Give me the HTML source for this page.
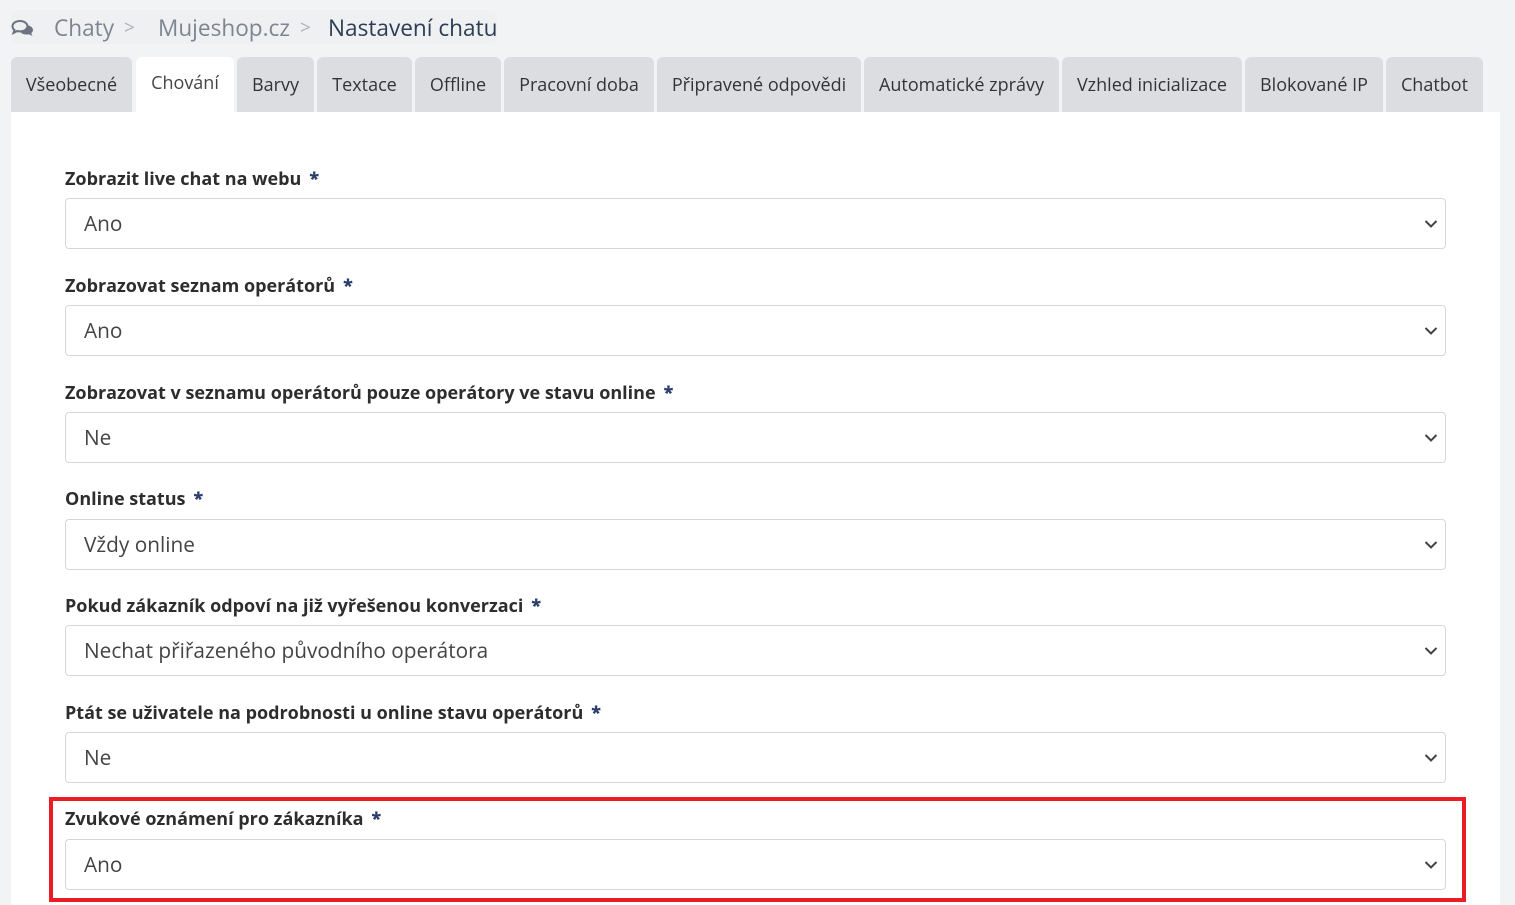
<!DOCTYPE html>
<html><head><meta charset="utf-8"><style>
*{box-sizing:border-box;margin:0;padding:0}
body{width:1515px;height:905px;overflow:hidden;background:#f2f3f5;font-family:"Open Sans","Liberation Sans",sans-serif;color:#333;position:relative}
.bc{position:absolute;left:11px;top:11px;width:486px;height:33px;background:#eff0f2;border-radius:6px;font-size:22.6px;line-height:33px;white-space:nowrap}
.bc span{position:absolute;top:0}
.g{color:#7d8592}.s{color:#aab0b8;font-size:19px}.d{color:#2c3e55}
.tab{position:absolute;top:57px;height:55px;background:#dcdde1;border-radius:6px 6px 0 0;font-size:18px;line-height:57px;text-align:center;color:#333}
.tab.a{background:#fff;line-height:53px;color:#444}
.panel{position:absolute;left:11px;top:112px;width:1489px;height:793px;background:#fff}
.lab{position:absolute;left:65px;font-weight:bold;font-size:18px;color:#2d2d2d;white-space:nowrap}
.lab b{color:#2c3e6a;margin-left:8px}
.sel{position:absolute;left:65px;width:1381px;height:51px;border:1px solid #d5d7da;border-radius:4px;font-size:20.8px;line-height:50px;padding-left:18px;color:#444}
.sel svg{position:absolute;right:7px;top:20px}
.red{position:absolute;left:49px;top:797px;width:1417px;height:105px;border:4px solid #ea1c24}
</style></head><body>
<div class="bc">
<svg style="position:absolute;left:0;top:8px" width="24" height="18" viewBox="0 0 24 18"><path d="M9 2C4.5 2 1.5 4.5 1.5 7.3c0 1.5.8 2.8 2 3.7L2.5 14l3.8-2c.9.3 1.8.4 2.7.4 4.5 0 7.5-2.5 7.5-5.1S13.5 2 9 2z" fill="none" stroke="#6b7380" stroke-width="2"/><path d="M17.5 6.5c2.7.7 4.5 2.5 4.5 4.5 0 1.3-.7 2.4-1.8 3.2L21.5 17l-3.7-1.8c-.8.2-1.6.3-2.5.3-2.5 0-4.6-.8-5.9-2.1 4 0 7.6-2.6 8.1-6.9z" fill="#6b7380"/></svg>
<span class="g" style="left:43px">Chaty</span><span class="s" style="left:113px">&gt;</span>
<span class="g" style="left:147px">Mujeshop.cz</span><span class="s" style="left:289px">&gt;</span>
<span class="d" style="left:317px">Nastavení chatu</span></div>
<div class="panel"></div>
<div class="tab" style="left:11px;width:121px">Všeobecné</div>
<div class="tab a" style="left:136px;width:98px">Chování</div>
<div class="tab" style="left:237px;width:77px">Barvy</div>
<div class="tab" style="left:317px;width:95px">Textace</div>
<div class="tab" style="left:415px;width:86px">Offline</div>
<div class="tab" style="left:504px;width:150px">Pracovní doba</div>
<div class="tab" style="left:657px;width:204px">Připravené odpovědi</div>
<div class="tab" style="left:864px;width:195px">Automatické zprávy</div>
<div class="tab" style="left:1062px;width:180px">Vzhled inicializace</div>
<div class="tab" style="left:1245px;width:138px">Blokované IP</div>
<div class="tab" style="left:1386px;width:97px">Chatbot</div>

<div class="lab" style="top:167px">Zobrazit live chat na webu<b>*</b></div>
<div class="sel" style="top:198px">Ano<svg width="14" height="10" viewBox="0 0 14 10"><path d="M1.5 2l5.5 5.5L12.5 2" fill="none" stroke="#444" stroke-width="2"/></svg></div>
<div class="lab" style="top:274px">Zobrazovat seznam operátorů<b>*</b></div>
<div class="sel" style="top:305px">Ano<svg width="14" height="10" viewBox="0 0 14 10"><path d="M1.5 2l5.5 5.5L12.5 2" fill="none" stroke="#444" stroke-width="2"/></svg></div>
<div class="lab" style="top:381px">Zobrazovat v seznamu operátorů pouze operátory ve stavu online<b>*</b></div>
<div class="sel" style="top:412px">Ne<svg width="14" height="10" viewBox="0 0 14 10"><path d="M1.5 2l5.5 5.5L12.5 2" fill="none" stroke="#444" stroke-width="2"/></svg></div>
<div class="lab" style="top:487px">Online status<b>*</b></div>
<div class="sel" style="top:519px">Vždy online<svg width="14" height="10" viewBox="0 0 14 10"><path d="M1.5 2l5.5 5.5L12.5 2" fill="none" stroke="#444" stroke-width="2"/></svg></div>
<div class="lab" style="top:594px">Pokud zákazník odpoví na již vyřešenou konverzaci<b>*</b></div>
<div class="sel" style="top:625px">Nechat přiřazeného původního operátora<svg width="14" height="10" viewBox="0 0 14 10"><path d="M1.5 2l5.5 5.5L12.5 2" fill="none" stroke="#444" stroke-width="2"/></svg></div>
<div class="lab" style="top:701px">Ptát se uživatele na podrobnosti u online stavu operátorů<b>*</b></div>
<div class="sel" style="top:732px">Ne<svg width="14" height="10" viewBox="0 0 14 10"><path d="M1.5 2l5.5 5.5L12.5 2" fill="none" stroke="#444" stroke-width="2"/></svg></div>
<div class="lab" style="top:807px">Zvukové oznámení pro zákazníka<b>*</b></div>
<div class="sel" style="top:839px">Ano<svg width="14" height="10" viewBox="0 0 14 10"><path d="M1.5 2l5.5 5.5L12.5 2" fill="none" stroke="#444" stroke-width="2"/></svg></div>
<div class="red"></div>
</body></html>
